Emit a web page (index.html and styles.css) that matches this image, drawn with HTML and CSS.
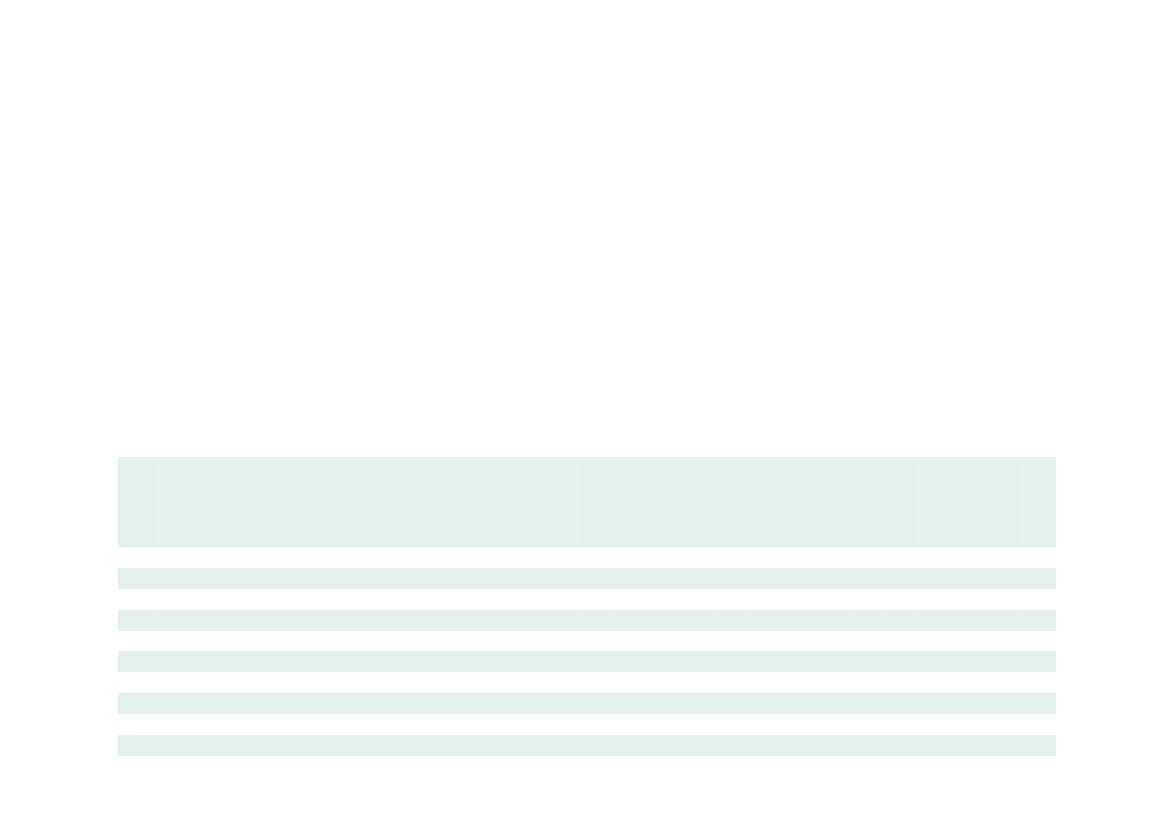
FILE: index.html
```html
<!DOCTYPE html>
<html>
<head>
<meta charset="utf-8">
<link rel="stylesheet" href="styles.css">
</head>
<body>
<main class="page">
  <table class="grid">
    <colgroup>
      <col class="c40"><col class="c419"><col class="c33"><col class="c104"><col class="c34">
      <col class="c102"><col class="c34"><col class="c34"><col class="c104"><col class="c34">
    </colgroup>
    <thead>
      <tr><th></th><th></th><th></th><th></th><th></th><th></th><th></th><th></th><th></th><th></th></tr>
    </thead>
    <tbody>
      <tr><td></td><td></td><td></td><td></td><td></td><td></td><td></td><td></td><td></td><td></td></tr>
      <tr><td></td><td></td><td></td><td></td><td></td><td></td><td></td><td></td><td></td><td></td></tr>
      <tr><td></td><td></td><td></td><td></td><td></td><td></td><td></td><td></td><td></td><td></td></tr>
      <tr><td></td><td></td><td></td><td></td><td></td><td></td><td></td><td></td><td></td><td></td></tr>
      <tr><td></td><td></td><td></td><td></td><td></td><td></td><td></td><td></td><td></td><td></td></tr>
      <tr><td></td><td></td><td></td><td></td><td></td><td></td><td></td><td></td><td></td><td></td></tr>
      <tr><td></td><td></td><td></td><td></td><td></td><td></td><td></td><td></td><td></td><td></td></tr>
      <tr><td></td><td></td><td></td><td></td><td></td><td></td><td></td><td></td><td></td><td></td></tr>
      <tr><td></td><td></td><td></td><td></td><td></td><td></td><td></td><td></td><td></td><td></td></tr>
      <tr><td></td><td></td><td></td><td></td><td></td><td></td><td></td><td></td><td></td><td></td></tr>
    </tbody>
  </table>
</main>
</body>
</html>
```
FILE: styles.css
```css
html, body {
  margin: 0;
  padding: 0;
  background: #ffffff;
  font-family: "Liberation Sans", Arial, sans-serif;
}
.page {
  padding: 457px 0 0 118px;
}
.grid {
  border-collapse: collapse;
  table-layout: fixed;
  width: 938px;
}
.c40 { width: 40px; }
.c419 { width: 419px; }
.c33 { width: 33px; }
.c104 { width: 104px; }
.c34 { width: 34px; }
.c102 { width: 102px; }
.grid th, .grid td {
  padding: 0;
  border: 0;
}
.grid th + th {
  border-left: 1px solid #e9f5ef;
}
.grid td + td {
  border-left: 1px solid #e4f2ec;
}
.grid thead tr {
  height: 90px;
  background: #e2f1ea;
}
.grid tbody tr {
  height: 20.9px;
}
.grid tbody tr:nth-child(even) {
  background: #e2f1ea;
}
.grid tbody tr:nth-child(odd) td {
  border-left-color: transparent;
}
```
